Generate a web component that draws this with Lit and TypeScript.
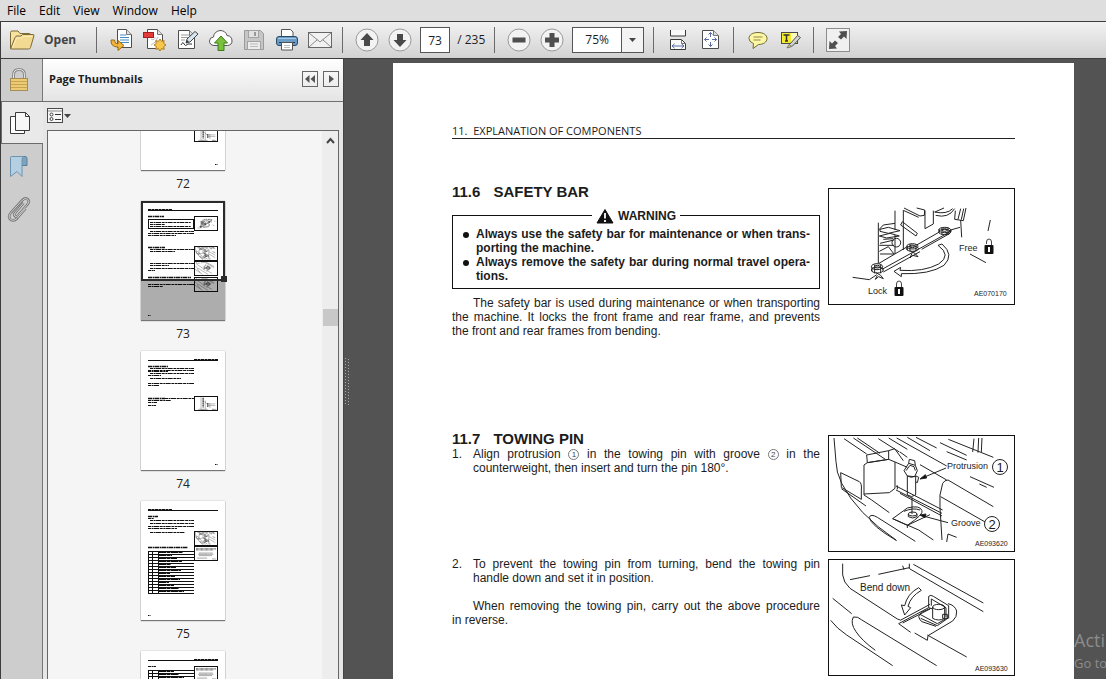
import { LitElement, html, svg, css, nothing } from "lit";
import { customElement, property } from "lit/decorators.js";
import { classMap } from "lit/directives/class-map.js";

/* ---------- toolbar and rail icons ---------- */

const icon = (w: number, h: number, body: unknown) =>
  html`<svg width=${w} height=${h} viewBox="0 0 ${w} ${h}" fill="none" aria-hidden="true">${body}</svg>`;

const sheet = (x: number, y: number, w: number, h: number, fold = 5) => svg`
  <path d="M${x} ${y}h${w - fold}l${fold} ${fold}v${h - fold}h${-w}z" fill="#fff" stroke="#4d4d4d" stroke-linejoin="round"/>
  <path d="M${x + w - fold} ${y}v${fold}h${fold}" fill="#ddd" stroke="#777" stroke-linejoin="round"/>`;

const folderIcon = icon(26, 22, svg`
  <path d="M1.5 19V3.5q0-1.500 1.500-1.500h6l2 2.500h9q1.500 0 1.500 1.500v2" fill="#f6e3a0" stroke="#7d6a38"/>
  <path d="M1.500 20L6 8.500q.5-1.500 2-1.500h4l1.500-1.500h10.500q1.200 0 .9 1.500L21.500 18.500q-.4 1.500-2 1.500z" fill="#f3da93" stroke="#7d6a38" stroke-linejoin="round"/>
  <path d="M3.500 18.500L7.500 9h5l1.500-1.500h9" stroke="#fbeebd"/>`);

const exportIcon = icon(24, 24, svg`
  ${sheet(7.5, 1.5, 14, 18)}
  <path d="M10 7h6M10 9.500h9M10 12h9M10 14.500h9" stroke="#3f8ec9"/>
  <path d="M1 12q-.5 7 7 7v3.500l6-5-6-5V16q-3.500 0-3.500-4z" fill="#f2b53c" stroke="#9a6a17" stroke-linejoin="round"/>`);

const createIcon = icon(24, 24, svg`
  ${sheet(4.5, 1.5, 15, 19)}
  <path d="M8 11q4 2 4-2M8 17q5-2 7-8" stroke="#bdbdbd"/>
  <rect x=".5" y="4.500" width="10" height="5" fill="#e23b3b" stroke="#a31f1f"/>
  <path d="M17 11l1.500 2.300 2.700-.6-.5 2.700 2.300 1.600-2.300 1.500.5 2.800-2.700-.6L17 23l-1.500-2.300-2.700.6.5-2.800L11 17l2.300-1.600-.5-2.700 2.700.6z" fill="#f8c74d" stroke="#b07c1f" stroke-linejoin="round"/>`);

const signIcon = icon(24, 24, svg`
  ${sheet(2.5, 2.5, 16, 18)}
  <path d="M5 7h8M5 9.500h7M5 12h4" stroke="#9b9b9b"/>
  <path d="M5 17q2-4 3-1t4 0h4" stroke="#333"/>
  <path d="M10 15l1-4L19 3.500l3 2.500-8 8z" fill="#d7e6f2" stroke="#444" stroke-linejoin="round"/>
  <path d="M10 15l1-3 2 1.500z" fill="#333"/>`);

const cloudIcon = icon(26, 22, svg`
  <path d="M6 16.500q-4.500-.5-4.500-4.500 0-3.500 4-4 .5-5.500 6.500-6.500 5.500 0 7 5 5 .5 5 5.500 0 4-4.500 4.500z" fill="#fff" stroke="#555"/>
  <path d="M13 7l6.500 7H16v7.500h-6V14H6.500z" fill="#79c13c" stroke="#3d7d18" stroke-linejoin="round"/>`);

const saveIcon = icon(22, 22, svg`
  <path d="M1.500 1.500h16l3 3v16h-19z" fill="#c6c6c6" stroke="#9a9a9a" stroke-linejoin="round"/>
  <rect x="5.500" y="1.500" width="10" height="7" fill="#e2e2e2" stroke="#a2a2a2"/>
  <path d="M12 3v4" stroke="#999" stroke-width="2"/>
  <rect x="4.500" y="12.500" width="13" height="8" fill="#ececec" stroke="#a2a2a2"/>
  <path d="M7 15h8M7 17.500h8" stroke="#bbb"/>`);

const printIcon = icon(24, 24, svg`
  <path d="M6.500 10V1.500h9l2.500 2.500v6z" fill="#fff" stroke="#555"/>
  <rect x="1.500" y="8.500" width="21" height="9" rx="2.500" fill="#6b9cc6" stroke="#2c4a66"/>
  <path d="M3 10.500h18" stroke="#a5cbe8"/>
  <path d="M4 14.500h16" stroke="#223a50"/>
  <path d="M6.500 14.500h11v7.500h-11z" fill="#fff" stroke="#555"/>
  <path d="M9 17.500h6M9 19.500h6" stroke="#bbb"/>`);

const mailIcon = icon(26, 20, svg`
  <rect x="1.500" y="2.500" width="23" height="15" fill="#f1f1f1" stroke="#666"/>
  <path d="M2 3l11 9 11-9M2 17l8.500-7.500M24 17l-8.500-7.500" stroke="#8a8a8a"/>`);

const round = (glyph: unknown) => icon(26, 26, svg`
  <circle cx="13" cy="13" r="11" fill="#f3f3f3" stroke="#9a9a9a"/>${glyph}`);
const upIcon = round(svg`<path d="M13 6l6.500 7H16v6h-6v-6H6.500z" fill="#4a4a4a"/>`);
const downIcon = round(svg`<path d="M13 20l6.500-7H16V7h-6v6H6.500z" fill="#4a4a4a"/>`);
const minusIcon = round(svg`<rect x="6.500" y="10.500" width="13" height="5" fill="#4f4f4f"/>`);
const plusIcon = round(svg`<path d="M10.500 6h5v4.500H20v5h-4.500V20h-5v-4.500H6v-5h4.500z" fill="#4f4f4f"/>`);

const fitWidthIcon = icon(18, 22, svg`
  <path d="M1.500 1v6h15V1" fill="#fafafa" stroke="#3a3a3a"/>
  <path d="M1.500 20.500v-10h11l4 4v6z" fill="#fafafa" stroke="#3a3a3a"/>
  <path d="M12.500 10.500v4h4" stroke="#777"/>
  <path d="M3 17h12M5.500 14.800L3 17l2.500 2.200M12.500 14.800L15 17l-2.500 2.200" stroke="#5b6aa3"/>`);
const fitPageIcon = icon(20, 22, svg`
  ${sheet(1.5, 1.5, 16, 18)}
  <path d="M9.500 3.500v4.500M9.500 13v4.500M3.500 10.500H8M11 10.500h5M7.500 5.500l2-2 2 2M7.500 15.500l2 2 2-2M5.500 8.500l-2 2 2 2M13.500 8.500l2 2-2 2" stroke="#5b6aa3"/>`);
const commentIcon = icon(22, 20, svg`
  <path d="M11 2.500c5.500 0 9 2.500 9 6s-3.500 6-8.500 6L6 18.500l.5-5Q2 12 2 8.500c0-3.500 3.500-6 9-6z" fill="#fdf6a2" stroke="#6e6a3a" stroke-linejoin="round"/>
  <path d="M6.500 7h9M6.500 10h7" stroke="#8b874f"/>`);
const highlightIcon = icon(22, 20, svg`
  <rect x="1.500" y="2.500" width="16" height="11" fill="#fbf8c0" stroke="#4a4a4a"/>
  <rect x="2" y="3" width="9" height="10" fill="#f5ea2c"/>
  <path d="M3.500 5h6M6.500 5v6M5 11h3" stroke="#333" stroke-width="1.500"/>
  <path d="M9.500 14.500L17.500 5.500l3 2-8 8.500-3 1z" fill="#cfd3d0" stroke="#555" stroke-linejoin="round"/>
  <path d="M7 18l2-3.500 2.500 2z" fill="#dfe46a" stroke="#777"/>`);
const expandIcon = icon(24, 24, svg`
  <rect x=".5" y=".5" width="23" height="23" fill="#f0f0f0" stroke="#8d8d8d"/>
  <path d="M13 3.500l8-.5-.5 8-2.500-2.500-3 3L12 9l3-3z" fill="#4f4f4f"/>
  <path d="M11 20.500l-8 .5.5-8L6 15.500l3-3L12 15l-3 3z" fill="#4f4f4f"/>`);

const lockIcon = icon(20, 24, svg`
  <path d="M4.500 11V7q0-5.500 5.500-5.500T15.500 7v4" stroke="#8c8c8c" stroke-width="3"/>
  <path d="M4.500 11V7q0-5.500 5.500-5.500T15.500 7v4" stroke="#e2e2e2"/>
  <rect x="1.500" y="10.500" width="17" height="12" fill="#ecca76" stroke="#a58d56"/>
  <path d="M2 13.500h16M2 16.500h16M2 19.500h16" stroke="#c9a44f"/>`);
const pagesIcon = icon(22, 24, svg`
  <path d="M6 5.500H1.500v17h14V20" fill="#fff" stroke="#3a3a3a"/>
  <path d="M6.500 1.500h10l4 4v14h-14z" fill="#f7f7f7" stroke="#3a3a3a" stroke-linejoin="round"/>
  <path d="M16.500 1.500v4h4" stroke="#3a3a3a"/>`);
const bookmarkIcon = icon(20, 24, svg`
  <path d="M12 2.500h4q2 0 2 2v7h-6z" fill="#7fa3bd" stroke="#587f9b"/>
  <path d="M1.500 3.500q0-1 1-1H15q-2 .5-2 3v17l-5-5-6.500 5z" fill="#b4cfe2" stroke="#6d93ae" stroke-linejoin="round"/>`);
const clipIcon = icon(24, 26, svg`
  <path d="M16.500 7L8 17q-1.500 2 0 3.200 1.500 1 3-.7L20.500 8.500q2.500-3 .2-5.200-2.600-2-5.200.7L4 16.500q-3.500 4-.5 7 3.300 2.300 6.500-1l8.500-10" stroke="#777" stroke-width="2.600"/>
  <path d="M16.500 7L8 17q-1.500 2 0 3.200 1.500 1 3-.7L20.500 8.500q2.500-3 .2-5.200-2.600-2-5.200.7L4 16.500q-3.500 4-.5 7 3.300 2.300 6.500-1l8.500-10" stroke="#d2d2d2"/>`);
const optionsIcon = icon(26, 17, svg`
  <rect x=".5" y=".5" width="15" height="14" fill="#f6f6f6" stroke="#4a4a4a"/>
  <path d="M1 3h14" stroke="#8a8a8a"/>
  <circle cx="4.500" cy="6.500" r="1.500" stroke="#444"/><circle cx="4.500" cy="11" r="1.500" stroke="#444"/>
  <path d="M8 6.500h6M8 11.500h6" stroke="#333"/>
  <path d="M17 6h7l-3.500 4z" fill="#444"/>`);
const collapseIcon = icon(16, 16, svg`<path d="M7.500 4v8L3 8zM13 4v8L8.500 8z" fill="#555"/>`);
const forwardIcon = icon(16, 16, svg`<path d="M6 4l5 4-5 4z" fill="#555"/>`);
const caretIcon = icon(9, 6, svg`<path d="M1 1h7L4.500 5z" fill="#444"/>`);
const scrollUpIcon = icon(9, 7, svg`<path d="M1 6l3.500-4L8 6" stroke="#444" stroke-width="2"/>`);

/* ---------- line drawings, plotted on a 600 x 390 board ---------- */

const safetyBarArt = svg`
  <path d="M175 128V250M250 90V210M225 92V150M225 165V222"/>
  <path d="M177 250L262 200M290 195L360 155M186 268L396 152M190 276L300 215M392 150L420 142M305 208L390 160"/>
  <path d="M247 125L292 160L288 168L242 135zM252 84L300 108L313 106L314 90L290 84M252 92L296 112"/>
  <path d="M315 92V146L340 132V92M345 96L372 84M347 106Q385 116 404 86M343 96Q380 104 398 86M406 92L404 118L430 122L438 84M414 118L422 86M424 119L431 86"/>
  <path d="M422 120L425 172M511 120L504 153M450 222L498 248M98 292L148 299L170 284"/>
  <path d="M354 196Q396 226 356 252Q312 276 240 271L242 262L222 274L244 290L244 281Q330 284 372 256Q404 224 366 192z"/>
  <path d="M176 150L190 135L225 130M180 148L205 142L240 152L205 160L180 154zM178 168L210 160L238 168L200 174zM180 190L222 180M178 196L222 196M178 214L205 200L222 222L180 222M190 178L220 176"/>
  <circle cx="229" cy="188" r="13"/>
  <ellipse cx="374" cy="150" rx="18" ry="8"/><ellipse cx="374" cy="156" rx="18" ry="8"/><ellipse cx="374" cy="150" rx="8" ry="4"/>
  <ellipse cx="277" cy="199" rx="17" ry="8"/><ellipse cx="277" cy="206" rx="18" ry="8"/><ellipse cx="277" cy="199" rx="8" ry="4"/>
  <ellipse cx="171" cy="260" rx="17" ry="9"/><ellipse cx="172" cy="270" rx="18" ry="9"/><ellipse cx="172" cy="260" rx="8" ry="4"/>
  <path d="M272 214L285 220L294 230L278 226L270 234L276 220M168 278L182 286L190 296L176 290L166 298L172 286"/>
  <path d="M358 148V156M366 142V164M384 142V164M262 198V210M270 192V214M288 192V214M156 262V274M164 254V280M182 254V280"/>`;

const groovePinArt = svg`
  <path d="M42 24L48 95Q48 125 65 160Q110 250 228 330"/>
  <path d="M72 26L140 72M100 24L196 88M112 24L180 70M175 26L238 66M206 24L262 58M230 24L380 108M262 22L330 62M288 22L350 54M360 38L440 76M385 28L520 82M240 66L262 82M300 104L380 150"/>
  <path d="M462 26L458 66M476 24L474 68M486 24L484 66M380 65L440 90M450 140L522 172M478 162L500 172"/>
  <path d="M140 75L206 62L206 88L142 98zM206 62L224 56L250 92M142 98L132 105V195L155 210L208 248M142 98L206 88L225 96L225 175L208 188L132 192M225 96L262 112"/>
  <path d="M62 128L118 155Q126 160 124 180V208L64 172zM64 176L138 228"/>
  <path d="M228 168L368 240M228 180L366 250M232 166V178M240 190L366 258"/>
  <path d="M368 160L360 195V232L366 330M368 160Q374 150 384 150L520 230M362 200L520 290"/>
  <path d="M262 138V195Q274 204 287 195V138Q274 146 262 138M276 202V252"/>
  <path d="M252 122L266 100L286 106L292 122L284 140L262 138zM258 122L270 106L282 110L286 122M266 100L268 88L284 92L286 106M288 138L296 142L292 158L288 156"/>
  <path d="M218 266L262 234Q300 224 306 242Q312 252 262 286zM252 244Q280 232 300 240M262 286L262 294M218 266L296 300L340 330M262 286L330 254"/>
  <ellipse cx="278" cy="252" rx="13" ry="6"/><path d="M265 252V260Q278 268 291 260V252"/>
  <path d="M148 262Q152 250 172 262L286 334M148 262Q150 285 230 332M380 336L384 312L410 322"/>
  <path d="M378 114L302 146M384 278L302 256"/>
  <path d="M300 147L316 134L320 144zM300 255L318 252L315 263z" fill="#111"/>`;

const bendDownArt = svg`
  <path d="M68 26V60Q70 82 90 100L232 192Q242 200 252 190L330 148"/>
  <path d="M90 74L150 62M175 58L268 38M248 32L252 44M268 26V42M280 28L490 144M270 42L490 170"/>
  <path d="M38 130L95 176M32 196Q50 220 80 240L218 332M100 186Q114 184 124 194L350 332M100 186Q90 205 108 230Q124 255 166 286"/>
  <path d="M236 206L272 232M284 234L322 256L324 242M322 240L440 306M236 206L326 158M248 204L330 162M324 242L398 198Q412 186 410 168Q404 150 384 146"/>
  <path d="M296 98Q262 116 254 152L244 150L254 180L272 158L264 154Q272 124 304 106z"/>
  <path d="M296 184L304 172L332 160M302 190L352 212L386 188M296 184Q298 196 306 200L348 214M300 178L352 206L380 190"/>
  <path d="M326 158V124Q332 118 340 124L386 152V190M334 152V132L378 158V186M326 158L338 162"/>
  <path d="M338 156V190Q356 200 374 190V156M368 178H382V190H368z"/>
  <ellipse cx="356" cy="156" rx="18" ry="8"/>`;

const plateArt = svg`
  <path d="M60 70H530M60 90H530M60 110H480" stroke-dasharray="18 12" stroke-width="16"/>
  <path d="M130 180H460M110 210H470M130 240H440M90 300H330M440 320H540" stroke-dasharray="14 8" stroke-width="16"/>`;

const hoseArt = svg`
  <path d="M180 40V330M230 40V300M280 120V330M330 200H520M330 240H520M260 140L340 220M390 180V300"/>
  <path d="M230 60V280M340 180V280" stroke-width="26" stroke-dasharray="40 12"/>
  <path d="M120 330H330M440 330H540" stroke-dasharray="20 8" stroke-width="16"/>`;

/* ---------- miniature pages ---------- */

type Row = [number, number, number];
interface Mini {
  page: number;
  headerRight?: boolean;
  rows: Row[];
  heads?: Row[];
  pics: [number, unknown][];
  box?: boolean;
  table?: [number, number];
}

const minis: Mini[] = [
  { page: 72, rows: [[9, 53, 20], [7, 53, 23]], pics: [[76, hoseArt]], headerRight: true },
  {
    page: 73, box: true,
    heads: [[7, 23, 15], [7, 24, 46], [7, 50, 76]],
    rows: [[9, 50, 21], [9, 24, 23], [9, 50, 25], [9, 14, 27], [9, 53, 30], [7, 53, 32], [7, 35, 34],
      [9, 53, 48], [9, 34, 50], [9, 53, 62], [9, 28, 64], [9, 53, 67], [7, 14, 69], [9, 53, 78], [7, 53, 83], [7, 22, 85]],
    pics: [[15, safetyBarArt], [45, groovePinArt], [60, bendDownArt], [76, bendDownArt]],
  },
  {
    page: 74, headerRight: true,
    heads: [[7, 27, 15], [7, 24, 47]],
    rows: [[9, 53, 17], [7, 53, 19], [7, 27, 20], [9, 53, 22], [7, 20, 24], [9, 40, 27], [7, 53, 32], [7, 18, 34],
      [24, 53, 47], [7, 30, 49], [7, 16, 51], [7, 15, 54]],
    pics: [[45, hoseArt]],
  },
  {
    page: 75, table: [50, 92],
    heads: [[7, 17, 15], [7, 47, 46]],
    rows: [[7, 13, 17], [9, 53, 19], [9, 53, 22], [7, 53, 25], [7, 36, 27], [9, 44, 31]],
    pics: [[30, groovePinArt], [45, plateArt]],
  },
  { page: 76, headerRight: true, table: [19, 91], rows: [[7, 15, 15]], pics: [[15, plateArt]] },
];

const stroke = (rows: Row[], width: number, dash: string) =>
  rows.map(([a, b, y]) => svg`<path d="M${a} ${y}.500H${b}" stroke="#111" stroke-width=${width} stroke-dasharray=${dash}/>`);

function miniPage(m: Mini) {
  const lines: number[] = [];
  if (m.table) for (let y = m.table[0]; y <= m.table[1]; y += 3) lines.push(y);
  return html`<svg class="sheet" viewBox="0 0 84 119" aria-hidden="true">
    ${stroke([m.headerRight ? [53, 77, 8] : [7, 31, 8]], 1, "3 .5")}
    <path d="M7 9.500H77" stroke="#111"/>
    ${m.box ? svg`<rect x="7.500" y="18.500" width="45" height="9" fill="none" stroke="#111"/>` : nothing}
    ${stroke(m.heads ?? [], 1.6, "4 .6 2 .4")}
    ${stroke(m.rows, 1, "3 .6 2 .4 5 .7")}
    ${lines.map((y, i) => svg`
      <path d="M7 ${y}.500H53" stroke="#111"/>
      ${i < lines.length - 1 ? svg`<path d="M18 ${y + 1}.500H${28 + ((y * 7) % 16)}" stroke="#111" stroke-dasharray="7 .5 4 .5"/>` : nothing}`)}
    ${m.table ? svg`<path d="M7.500 ${m.table[0]}V${m.table[1]}M11.500 ${m.table[0]}V${m.table[1]}M17.500 ${m.table[0]}V${m.table[1]}" stroke="#111"/>` : nothing}
    ${m.pics.map(([y, art]) => svg`
      <rect x="53.500" y="${y}.500" width="23" height="14" fill="#fff" stroke="#111"/>
      <g transform="translate(52.500 ${y - 0.5}) scale(.042)" fill="none" stroke="#333" stroke-width="8">${art}</g>`)}
    ${stroke([m.headerRight ? [74, 77, 113] : [7, 10, 114]], 1, "1 .5")}
  </svg>`;
}

@customElement("page-thumbnail")
export class PageThumbnail extends LitElement {
  @property({ attribute: false }) mini!: Mini;
  @property({ type: Boolean }) current = false;

  static styles = css`
    :host { display: block; }
    .thumb {
      display: flex; flex-direction: column; align-items: center;
      width: 100%; padding: 0; border: 0; background: none; color: #222;
      font: 12px/28px "Open Sans", "Noto Sans", sans-serif;
    }
    .paper {
      position: relative; width: 84px; height: 119px;
      background: #fff; box-shadow: 0 1px 1px #777, 0 0 1px #999;
    }
    .sheet { display: block; width: 100%; height: 100%; }
    .rest { position: absolute; inset: 80px 0 0; background: #000; opacity: 0.32; }
    .view {
      position: absolute; inset: 0 0 39px; box-sizing: border-box;
      border: 2px solid #2b2b2b;
    }
    .grip { position: absolute; right: -2px; bottom: 38px; width: 6px; height: 6px; background: #2b2b2b; }
    .label { margin-bottom: 3px; }
  `;

  render() {
    return html`<button class="thumb" aria-label="Page ${this.mini.page}">
      <span class="paper">
        ${miniPage(this.mini)}
        ${this.current ? html`<span class="rest"></span><span class="view"></span><span class="grip"></span>` : nothing}
      </span>
      <span class="label">${this.mini.page}</span>
    </button>`;
  }
}

/* ---------- figures of the manual ---------- */

const figure = (name: string, shift: string, art: unknown, labels: unknown) => html`
  <svg class="figure" viewBox="0 0 187 117" role="img" aria-label=${name}>
    <g transform="scale(.33333) translate(${shift})" fill="none" stroke="#222" stroke-width="3" stroke-linejoin="round">${art}</g>
    ${labels}
    <rect x=".5" y=".5" width="186" height="116" fill="none" stroke="#111"/>
  </svg>`;

const padlock = (x: number, y: number, open: boolean) => svg`
  <path d="M${x + 2.5} ${y + (open ? 3 : 6)}V${y + 1}q0-3 2.500-3t2.500 3V${y + 6}" fill="none" stroke="#444"/>
  <rect x=${x + 0.5} y=${y + 4} width="9" height="9" rx="1" fill="#111"/>
  <path d="M${x + 5} ${y + 6}v5" stroke="#fff" stroke-width="2"/>`;

const numbered = (x: number, y: number, n: number) => svg`
  <circle cx=${x} cy=${y} r="7.500" fill="#fff" stroke="#222"/>
  <text class="num" x=${x} y=${y + 5} text-anchor="middle">${n}</text>`;

@customElement("manual-page")
export class ManualPage extends LitElement {
  static styles = css`
    :host {
      display: block; flex: 1; min-width: 0; min-height: 800px; box-sizing: border-box;
      padding: 61px 59px; background: #fff; color: #1c1c1c;
      font: 12px/14px "Liberation Sans", Arial, sans-serif;
    }
    .running { border-bottom: 1px solid #222; font: 11px/14px "Open Sans", "Noto Sans", sans-serif; white-space: pre; }
    .block { display: grid; grid-template-columns: minmax(0, 1fr) 187px; column-gap: 8px; align-items: start; }
    .safety { margin-top: 45px; }
    .towing { margin-top: 93px; }
    .bend { margin-top: 5px; }
    .figure { display: block; width: 100%; margin-top: 4px; font: 9px "Liberation Sans", Arial, sans-serif; fill: #1c1c1c; }
    .bend .figure { margin-top: 2px; }
    .code { font-size: 7px; }
    .wide { font-size: 10px; }
    .num { font-size: 13px; }
    h2 { display: flex; gap: 13px; margin: 0; font-size: 15px; line-height: 16px; }
    p { margin: 0; }
    .line { display: block; }
    .fill { text-align-last: justify; }
    .indent { padding-left: 21px; }
    .warning { margin: 15px 0 7px; padding: 0 9px 5px; border: 1px solid #111; font-weight: bold; }
    .caption { display: flex; width: max-content; align-items: center; gap: 4px; margin: -8px auto 3px; padding: 0 4px; background: #fff; line-height: 16px; }
    .warning ul { margin: 0; padding: 0; list-style: none; }
    .warning li, .step { display: grid; grid-template-columns: 14px minmax(0, 1fr); }
    .warning li::before { content: ""; width: 6px; height: 6px; margin: 5px 0 0 1px; border-radius: 50%; background: #111; }
    .step { grid-template-columns: 21px minmax(0, 1fr); }
    .ring {
      display: inline-block; box-sizing: border-box; width: 11px; height: 11px;
      border: 1px solid #777; border-radius: 50%; color: #444;
      font-size: 8px; line-height: 9px; text-align: center; text-align-last: center; vertical-align: 1px;
    }
    .after { margin-top: 14px; }
  `;

  render() {
    return html`
      <header class="running">11.  EXPLANATION OF COMPONENTS</header>
      <section class="block safety">
        <div>
          <h2><span>11.6</span><span>SAFETY BAR</span></h2>
          <div class="warning">
            <div class="caption">
              ${icon(18, 16, svg`<path d="M9 1.500L17 15H1z" fill="#111" stroke="#111" stroke-linejoin="round"/><path d="M9 5v5.500M9 12v2" stroke="#fff" stroke-width="1.800"/>`)}
              <span>WARNING</span>
            </div>
            <ul>
              <li><span><span class="line fill">Always use the safety bar for maintenance or when trans-</span><span class="line">porting the machine.</span></span></li>
              <li><span><span class="line fill">Always remove the safety bar during normal travel opera-</span><span class="line">tions.</span></span></li>
            </ul>
          </div>
          <p>
            <span class="line fill indent">The safety bar is used during maintenance or when transporting</span>
            <span class="line fill">the machine. It locks the front frame and rear frame, and prevents</span>
            <span class="line">the front and rear frames from bending.</span>
          </p>
        </div>
        ${figure("Safety bar between lock and free positions", "-24 -24", safetyBarArt, svg`
          <text x="131" y="63">Free</text>${padlock(156, 53, true)}
          <text x="40" y="106">Lock</text>${padlock(66, 95, false)}
          <text class="code" x="146" y="108">AE070170</text>`)}
      </section>
      <section class="block towing">
        <div>
          <h2><span>11.7</span><span>TOWING PIN</span></h2>
          <div class="step"><span>1.</span><p>
            <span class="line fill">Align protrusion <span class="ring">1</span> in the towing pin with groove <span class="ring">2</span> in the</span>
            <span class="line">counterweight, then insert and turn the pin 180°.</span></p></div>
        </div>
        ${figure("Towing pin, protrusion and groove", "-24 -15", groovePinArt, svg`
          <text x="119" y="34">Protrusion</text>${numbered(172, 32, 1)}
          <text x="123" y="91">Groove</text>${numbered(164, 89, 2)}
          <text class="code" x="147" y="111">AE093620</text>`)}
      </section>
      <section class="block bend">
        <div>
          <div class="step"><span>2.</span><p>
            <span class="line fill">To prevent the towing pin from turning, bend the towing pin</span>
            <span class="line">handle down and set it in position.</span></p></div>
          <p class="after">
            <span class="line fill indent">When removing the towing pin, carry out the above procedure</span>
            <span class="line">in reverse.</span>
          </p>
        </div>
        ${figure("Towing pin handle bent down", "-24 -12", bendDownArt, svg`
          <text class="wide" x="32" y="32">Bend down</text>
          <text class="code" x="147" y="112">AE093630</text>`)}
      </section>`;
  }
}

/* ---------- application window ---------- */

const tool = (label: string, glyph: unknown) => html`<button class="tool" aria-label=${label}>${glyph}</button>`;

@customElement("app-root")
export class AppRoot extends LitElement {
  static styles = css`
    :host {
      display: flex; flex-direction: column; height: 100vh; overflow: hidden;
      background: #535353; color: #1e1e1e;
      font: 12px/16px "Open Sans", "Noto Sans", sans-serif;
    }
    button, input, select { font: inherit; color: inherit; }
    button { display: flex; align-items: center; justify-content: center; padding: 0; border: 0; background: none; }
    svg { display: block; flex: none; }
    .menu { display: flex; height: 21px; flex: none; padding-left: 1px; background: #dedede; }
    .menu button { padding: 0 7px 0 6px; color: #000; }
    .toolbar {
      display: flex; align-items: center; height: 36px; flex: none;
      border: solid #3c3c3c; border-width: 1px 0 1px 1px;
      background: linear-gradient(#f2f2f2, #d2d2d2);
    }
    .open { gap: 9px; padding: 0 20px 0 8px; color: #444; font-weight: bold; }
    .sep { width: 1px; height: 26px; flex: none; margin: 0 7px 0 6px; background: #6a6a6a; }
    .open + .sep { margin: 0 8px 0 0; }
    .tool { width: 33px; height: 32px; flex: none; }
    .page { box-sizing: border-box; width: 30px; height: 26px; margin-left: 4px; padding: 0; border: 1px solid #555; background: #fff; text-align: center; }
    .total { margin: 0 3px 0 4px; white-space: pre; }
    .zoom { display: grid; grid-template-columns: 48px 22px; height: 26px; box-sizing: border-box; margin: 0 3px 0 4px; border: 1px solid #555; background: #fff; align-items: center; justify-items: center; }
    .zoom select { grid-area: 1 / 1 / 2 / 3; width: 100%; height: 24px; padding: 0 0 0 12px; border: 0; background: none; appearance: none; }
    .drop { grid-area: 1 / 2; display: grid; place-items: center; box-sizing: border-box; width: 22px; height: 24px; border-left: 1px solid #555; background: #f3f3f3; pointer-events: none; }
    .body { display: flex; flex: 1; min-height: 0; }
    .rail { display: flex; flex-direction: column; flex: none; box-sizing: border-box; width: 43px; border-left: 1px solid #3c3c3c; background: #cdcdcd; }
    .rail button { height: 43px; flex: none; padding-right: 6px; border-right: 1px solid #777; }
    .rail button:first-child { height: 42px; }
    .rail .active { border: 1px solid #6b6b6b; border-right: 0; background: #e9e9e9; }
    .rest { flex: 1; border-right: 1px solid #777; }
    .panel { display: flex; flex-direction: column; flex: none; box-sizing: border-box; width: 301px; background: #e6e6e6; border-right: 1px solid #444; }
    .title { display: flex; align-items: center; gap: 5px; height: 40px; flex: none; padding: 0 4px 2px 6px; border-bottom: 1px solid #707070; background: linear-gradient(#fff, #e4e4e4); }
    .title h1 { flex: 1; margin: 0; font-size: 11px; line-height: 16px; }
    .title button { box-sizing: border-box; width: 16px; height: 16px; border: 1px solid #666; }
    .options { align-self: flex-start; height: 28px; padding-left: 4px; }
    .list { display: flex; flex: 1; min-height: 0; margin: 0 4px; border: solid #666; border-width: 1px 1px 0; background: #f5f5f5; }
    .strip { flex: 1; overflow: hidden; }
    .scrolled { margin: -80px 4px 0 0; }
    .bar { display: flex; flex-direction: column; align-items: center; width: 16px; background: #ededed; }
    .bar button { height: 18px; width: 100%; }
    .knob { width: 15px; height: 17px; margin-top: 160px; background: #c8c8c8; }
    .view { position: relative; display: flex; flex: 1; min-width: 0; overflow: hidden; padding: 4px 32px 0 49px; box-sizing: border-box; align-items: flex-start; background: #535353; }
    .grip { position: absolute; left: 0; top: 299px; }
    .mark { position: absolute; right: 0; bottom: 4px; width: 32px; color: #8c8c8c; font-size: 13px; line-height: 24px; white-space: nowrap; }
    .mark strong { display: block; font-size: 18px; font-weight: normal; line-height: 22px; }
  `;

  render() {
    return html`
      <nav class="menu" aria-label="Menu">${["File", "Edit", "View", "Window", "Help"].map((m) => html`<button>${m}</button>`)}</nav>
      <div class="toolbar" role="toolbar" aria-label="Tools">
        <button class="open">${folderIcon}<span>Open</span></button>
        <span class="sep"></span>
        ${tool("Export", exportIcon)}${tool("Create PDF", createIcon)}${tool("Sign", signIcon)}${tool("Upload", cloudIcon)}
        ${tool("Save", saveIcon)}${tool("Print", printIcon)}${tool("Send", mailIcon)}
        <span class="sep"></span>
        ${tool("Previous page", upIcon)}${tool("Next page", downIcon)}
        <input class="page" aria-label="Page number" .value=${"73"} />
        <span class="total"> / 235</span>
        <span class="sep"></span>
        ${tool("Zoom out", minusIcon)}${tool("Zoom in", plusIcon)}
        <span class="zoom">
          <select aria-label="Zoom"><option>75%</option></select>
          <span class="drop">${caretIcon}</span>
        </span>
        <span class="sep"></span>
        ${tool("Fit width", fitWidthIcon)}${tool("Fit page", fitPageIcon)}
        <span class="sep"></span>
        ${tool("Comment", commentIcon)}${tool("Highlight text", highlightIcon)}
        <span class="sep"></span>
        ${tool("Reading mode", expandIcon)}
      </div>
      <div class="body">
        <nav class="rail" aria-label="Panels">
          ${[["Security", lockIcon], ["Page Thumbnails", pagesIcon], ["Bookmarks", bookmarkIcon], ["Attachments", clipIcon]].map(
            ([label, glyph], i) => html`<button class=${classMap({ active: i === 1 })} aria-label=${label as string}>${glyph}</button>`)}
          <span class="rest"></span>
        </nav>
        <aside class="panel">
          <div class="title">
            <h1>Page Thumbnails</h1>
            <button aria-label="Collapse">${collapseIcon}</button>
            <button aria-label="Expand">${forwardIcon}</button>
          </div>
          <button class="options" aria-label="Options">${optionsIcon}</button>
          <div class="list">
            <div class="strip"><div class="scrolled">
              ${minis.map((m) => html`<page-thumbnail .mini=${m} ?current=${m.page === 73}></page-thumbnail>`)}
            </div></div>
            <div class="bar"><button aria-label="Scroll up">${scrollUpIcon}</button><span class="knob"></span></div>
          </div>
        </aside>
        <main class="view">
          <svg class="grip" width="6" height="48" viewBox="0 0 6 48" aria-hidden="true">
            <path d="M1.500 0V48M4.500 1V48" stroke="#a8a8a8" stroke-dasharray="1 2"/>
          </svg>
          <manual-page></manual-page>
          <div class="mark"><strong>Acti</strong>Go to</div>
        </main>
      </div>`;
  }
}
